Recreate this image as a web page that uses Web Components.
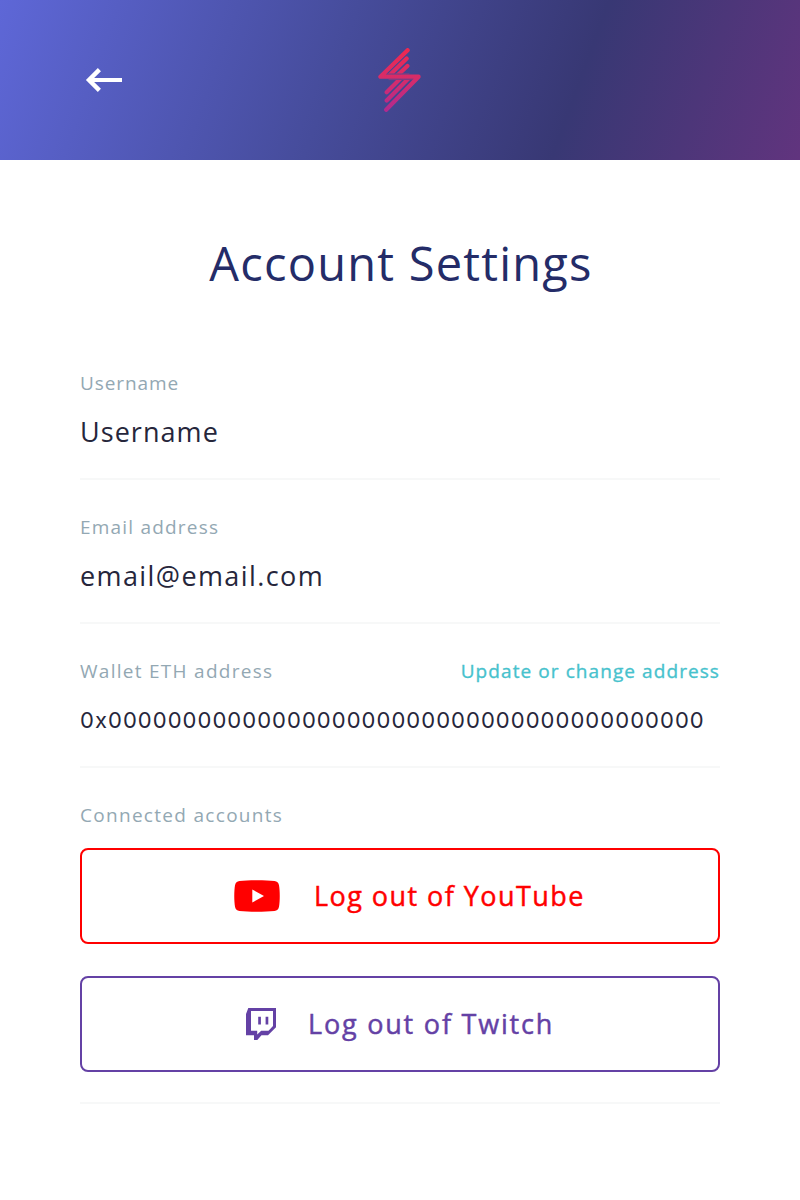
<!DOCTYPE html>
<html lang="en">
<head>
<meta charset="utf-8">
<title>Account Settings</title>
<style>
  body { margin: 0; background: #fff; font-family: "Open Sans", "Noto Sans", sans-serif; }
</style>
</head>
<body>
<settings-page></settings-page>
<script>
const define = (name, html) => {
  const template = document.createElement('template');
  template.innerHTML = html;
  customElements.define(name, class extends HTMLElement {
    constructor() {
      super();
      this.attachShadow({ mode: 'open' }).append(template.content.cloneNode(true));
    }
  });
};

define('app-header', `
<style>
  :host { box-sizing: border-box; height: 160px; padding: 0 80px; display: grid;
    grid-template-columns: 1fr 44px 1fr; align-items: center;
    background: linear-gradient(110deg, #5e67d7 0%, #464c9b 42%, #383874 71%, #61347e 100%); }
  svg { display: block; }
</style>
<svg width="48" height="48" viewBox="0 0 48 48" fill="none" stroke="#fff" stroke-width="4">
  <path d="M42 24H9"/><path d="M19.4 13.6 9 24l10.4 10.4" stroke-width="4.4"/>
</svg>
<svg width="44" height="64" viewBox="0 0 44 64" fill="none" stroke="url(#bolt)" stroke-width="4.2" stroke-linecap="round" stroke-linejoin="round">
  <defs>
    <linearGradient id="bolt" gradientUnits="userSpaceOnUse" x1="22" y1="0" x2="22" y2="64">
      <stop offset="0" stop-color="#f0284f"/><stop offset=".45" stop-color="#d82c68"/><stop offset="1" stop-color="#b02a90"/>
    </linearGradient>
    <clipPath id="top"><path d="M0 0h44v25.5H0z"/></clipPath>
    <clipPath id="bottom"><path d="M0 32h44v32H0z"/></clipPath>
  </defs>
  <path d="M29.6 2.2 2.4 28.7h38.2L8.2 61.8"/>
  <g clip-path="url(#top)"><path d="M28.7 10.6 10 28.7M29.4 18 18 28.7"/></g>
  <g clip-path="url(#bottom)"><path d="M8.7 44.3 24 29M8.7 52.5 32 29"/></g>
  <path d="M7 25.9h24M11 31.6h24" stroke-width="1" opacity=".45"/>
</svg>`);

define('page-title', `
<style>
  :host { display: block; padding-top: 73px; text-align: center; text-indent: 2px; color: #242c68;
    font-size: 47px; line-height: 60px; letter-spacing: 1.22px; }
</style>
<slot></slot>`);

define('field-label', `
<style>
  :host { display: block; font-size: 19px; line-height: 24px; color: #93a8b3;
    letter-spacing: var(--label-tracking, 1.2px); white-space: nowrap; }
</style>
<slot></slot>`);

define('settings-row', `
<style>
  :host { box-sizing: border-box; height: 144px; padding-top: 35px; display: flex;
    flex-direction: column; gap: 17px; border-bottom: 2px solid #f7f8f8; }
  .head { display: flex; justify-content: space-between; }
  .value { font-family: var(--value-font, inherit); font-size: var(--value-size, 27px);
    line-height: 40px; color: #26263b;
    letter-spacing: var(--value-tracking, 1.2px); white-space: nowrap; }
</style>
<div class="head"><field-label><slot name="label"></slot></field-label><slot name="action"></slot></div>
<div class="value"><slot></slot></div>`);

define('text-link', `
<style>
  :host { display: block; font-family: "Open Sans", sans-serif; font-size: 19px; line-height: 24px;
    color: #47c2cd; letter-spacing: 1.08px; white-space: nowrap; -webkit-text-stroke: .35px; }
</style>
<slot></slot>`);

define('logout-button', `
<style>
  :host { box-sizing: border-box; display: flex; align-items: center; height: 96px;
    border: 2px solid; border-radius: 8px; font-size: 27px; line-height: 40px;
    white-space: nowrap; -webkit-text-stroke: .45px; }
</style>
<slot name="icon"></slot><span><slot></slot></span>`);

define('youtube-icon', `
<style>:host, svg { display: block; }</style>
<svg width="46" height="32" viewBox="0 0 46 32" fill="#f00">
  <path fill-rule="evenodd" d="M23 .3c-7 0-13 .3-17.500.8C3 1.400 1.500 2.800 1 5.300 0 11 0 21 1 26.700c.5 2.500 2 3.900 4.500 4.200 10 1.100 25 1.100 35 0 2.500-.3 4-1.700 4.500-4.200 1-5.700 1-15.700 0-21.400-.5-2.500-2-3.900-4.500-4.200C36 .6 30 .3 23 .3ZM18.300 9.500v13L30 16Z"/>
</svg>`);

define('twitch-icon', `
<style>:host, svg { display: block; }</style>
<svg width="30" height="32" viewBox="0 0 30 32" fill="#6441a5">
  <path fill-rule="evenodd" d="M2.300 0H30v19.300L22 27.300h-6.500L11.300 32H8v-4.700H0V6ZM5 3v19.700h6.200v3.800l4-3.800h7.300L27 18V3Z"/>
  <path d="M12.200 8.700h2.700v7.900h-2.700zM19.600 8.700h2.700v7.900h-2.700z"/>
</svg>`);

define('connected-accounts', `
<style>
  :host { box-sizing: border-box; height: 336px; padding-top: 35px; display: flex;
    flex-direction: column; border-bottom: 2px solid #f7f8f8; }
  .list { display: flex; flex-direction: column; gap: 32px; padding-top: 21px; }
</style>
<field-label><slot name="label"></slot></field-label>
<div class="list"><slot></slot></div>`);

define('settings-page', `
<style>
  :host { display: block; height: 1200px; overflow: hidden; }
  main { display: flex; flex-direction: column; padding: 0 80px; }
  page-title { margin-bottom: 43px; }
  .name { --label-tracking: .9px; --value-tracking: 1.05px; }
  .email { --label-tracking: 1.2px; --value-tracking: 1.4px; }
  .wallet { --label-tracking: 1.28px; --value-font: Inter, sans-serif; --value-size: 22px; --value-tracking: 1.04px; }
  connected-accounts { --label-tracking: 1.3px; }
  .youtube { color: #f00; padding-left: 152px; gap: 34px; letter-spacing: 1.45px; }
  .twitch { color: #6441a5; padding-left: 164px; gap: 32px; letter-spacing: 1.8px; }
</style>
<app-header></app-header>
<main>
  <page-title>Account Settings</page-title>
  <settings-row class="name"><span slot="label">Username</span>Username</settings-row>
  <settings-row class="email"><span slot="label">Email address</span>email@email.com</settings-row>
  <settings-row class="wallet"><span slot="label">Wallet ETH address</span><text-link slot="action">Update or change address</text-link>0x0000000000000000000000000000000000000000</settings-row>
  <connected-accounts>
    <span slot="label">Connected accounts</span>
    <logout-button class="youtube"><youtube-icon slot="icon"></youtube-icon>Log out of YouTube</logout-button>
    <logout-button class="twitch"><twitch-icon slot="icon"></twitch-icon>Log out of Twitch</logout-button>
  </connected-accounts>
</main>`);
</script>
</body>
</html>
